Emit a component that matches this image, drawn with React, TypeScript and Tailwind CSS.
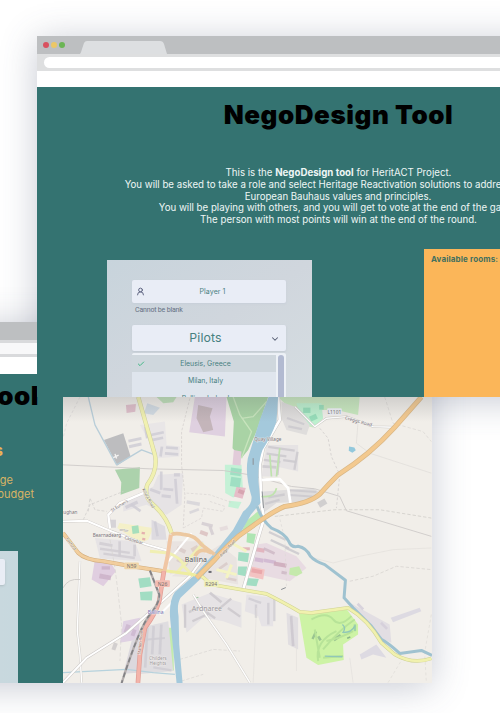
import React from "react";
import { Check, ChevronDown, UserRound } from "lucide-react";

type Road = { d: string; c: string; w: number; dash?: string };

const areas: [string, string][] = [
  ["M405 6 L500 6 L495 125 L388 112Z", "#dfd0e0"],
  ["M415 30 L458 40 L450 65 L460 105 L430 112 L410 70Z", "#c4b5ba"],
  ["M500 6 L625 6 L590 110 L565 165 L545 190 L518 160 L522 80Z", "#a9d3a5"],
  ["M132 135 L190 115 L212 185 L172 212Z", "#bdbdbf"],
  ["M165 225 L240 217 L238 280 L182 300 L184 262Z", "#acd2ac"],
  ["M198 30 L228 27 L226 50 L200 54Z", "#dfbfca"],
  ["M262 25 L300 38 L280 60 L252 55Z", "#d2dbe3"],
  ["M290 6 L350 6 L340 22 L310 25Z", "#bfe0b8"],
  ["M495 210 L545 210 L550 295 L520 308 L496 295Z", "#c4f1d6"],
  ["M522 165 L545 170 L542 212 L518 210Z", "#e2cbd9"],
  ["M530 275 L558 280 L548 312 L522 305Z", "#e6bdc8"],
  ["M508 318 L545 322 L535 342 L505 336Z", "#c4f1d6"],
  ["M178 385 L280 400 L265 435 L240 445 L172 400Z", "#f4f0c8"],
  ["M215 395 L235 392 L238 415 L218 418Z", "#a7dfbc"],
  ["M655 6 L900 6 L895 60 L830 45 L780 45 L790 70 L760 98 L730 90 L705 55Z", "#c9e9bf"],
  ["M710 25 L785 25 L790 70 L760 96 L725 75Z", "#bdf0cf"],
  ["M105 495 L150 500 L168 530 L130 575 L95 555Z", "#e0cee0"],
  ["M235 552 L270 548 L275 575 L240 580Z", "#a2ddc3"],
  ["M240 592 L278 590 L276 618 L242 617Z", "#a2ddc3"],
  ["M190 680 L240 670 L235 735 L180 745Z", "#dfd1e3"],
  ["M325 700 L340 700 L342 830 L325 810Z", "#c3ebae"],
  ["M585 450 L620 445 L710 485 L740 520 L690 560 L575 535Z", "#e8dbe2"],
  ["M572 515 L615 525 L610 555 L568 545Z", "#f3c3c2"],
  ["M562 550 L597 553 L590 575 L560 572Z", "#a2ddc3"],
  ["M690 520 L718 515 L728 535 L710 545 L688 540Z", "#c5e9ac"],
  ["M536 472 L568 476 L564 503 L534 498Z", "#a2ddc3"],
  ["M535 516 L562 516 L557 545 L532 540Z", "#a2ddc3"],
  ["M560 378 L600 345 L603 370 L545 412Z", "#b9e9b0"],
  ["M562 415 L588 418 L582 448 L560 443Z", "#aee5b3"],
  ["M403 610 L415 607 L427 630 L418 638Z", "#a2c9a7"],
  ["M718 658 L862 646 L895 690 L895 720 L850 750 L852 797 L775 812 L740 790Z", "#cdf3a5"],
  ["M240 700 L325 680 L340 830 L235 840Z", "#dfdde0"],
  ["M215 740 L240 720 L232 835 L190 838Z", "#dcd9de"],
  ["M365 630 L450 595 L545 625 L545 700 L490 680 L430 670 L380 715Z", "#e6e3e5"],
  ["M105 430 L225 440 L245 500 L120 492Z", "#e6e3e5"],
  ["M240 90 L315 80 L320 150 L360 155 L358 185 L295 190Z", "#e9e6e7"],
  ["M295 240 L370 235 L365 330 L320 360 L260 330 L190 350 L190 325 L280 275Z", "#e6e3e5"],
  ["M620 150 L715 150 L715 230 L650 215 L655 245 L605 245Z", "#e6e3e4"],
  ["M610 290 L760 280 L790 300 L735 320 L650 325 L610 355Z", "#dfdddd"],
  ["M665 20 L705 35 L750 90 L740 120 L680 105 L665 70Z", "#dfdddc"],
  ["M680 655 L715 670 L715 765 L685 750Z", "#e1dee1"],
  ["M560 600 L640 610 L640 695 L605 695 L595 665 L555 650Z", "#e6e3e6"],
  ["M275 375 L315 395 L320 435 L275 435Z", "#dedbe0"],
  ["M870 625 L990 690 L995 745 L960 730Z", "#e2dee3"],
  ["M993 670 L1080 640 L1085 650 L1000 683Z", "#dddae2"],
  ["M900 780 L950 750 L980 790 L940 780 L905 795Z", "#dddae2"],
  ["M320 440 L430 440 L440 500 L330 540Z", "#e9e3e0"],
  ["M335 545 L480 450 L530 490 L535 570 L430 550Z", "#e9e4e1"],
];

const blocks: [number, number, number, number, number, string][] = [
  [205, 130, 40, 9, -12, "#cfcdd5"], [207, 147, 38, 9, -12, "#cfcdd5"], [255, 95, 9, 35, -10, "#cfcdd5"], [272, 112, 40, 8, -12, "#cfcdd5"],
  [275, 128, 35, 8, -12, "#cfcdd5"], [300, 155, 8, 30, 8, "#cfcdd5"], [318, 155, 36, 8, 4, "#cfcdd5"], [315, 173, 40, 8, 4, "#cfcdd5"],
  [300, 230, 8, 55, 0, "#cfcdd5"], [342, 235, 18, 10, 0, "#cfcdd5"], [345, 252, 8, 75, -4, "#cfcdd5"], [310, 280, 30, 8, 5, "#cfcdd5"],
  [305, 300, 28, 9, 5, "#cfcdd5"], [270, 285, 32, 9, 20, "#cfcdd5"], [195, 325, 40, 10, -25, "#cfcdd5"], [210, 335, 35, 8, 35, "#cfcdd5"],
  [380, 320, 40, 10, 10, "#d6d3d8"], [388, 345, 30, 8, -20, "#d6d3d8"], [150, 375, 18, 24, 0, "#d1ced4"], [285, 380, 8, 45, -10, "#cfcdd5"],
  [512, 220, 32, 22, 8, "#99dcbf"], [512, 248, 30, 28, 8, "#99dcbf"], [535, 285, 18, 12, 20, "#d3a0ab"], [730, 38, 22, 16, 0, "#8fd9b5"],
  [750, 60, 22, 16, -25, "#8fd9b5"], [778, 30, 14, 14, 0, "#8fd9b5"], [245, 412, 10, 7, 10, "#e2a4a9"], [247, 430, 9, 7, 10, "#e2a4a9"],
  [625, 158, 80, 7, 8, "#cbc9ce"], [620, 177, 60, 7, 8, "#cbc9ce"], [612, 195, 50, 7, 8, "#cbc9ce"], [608, 212, 42, 8, 4, "#cbc9ce"],
  [652, 180, 7, 60, 5, "#cbc9ce"], [705, 170, 7, 55, 10, "#cbc9ce"], [670, 195, 38, 7, 8, "#cbc9ce"], [625, 300, 50, 7, -10, "#cbc9ce"],
  [690, 286, 80, 6, 4, "#cbc9ce"], [690, 300, 75, 6, 4, "#cbc9ce"], [615, 318, 45, 7, -15, "#cbc9ce"], [680, 75, 55, 7, 20, "#cbc9ce"],
  [685, 95, 42, 7, 12, "#cbc9ce"], [775, 316, 25, 18, -30, "#cbc9ca"], [118, 445, 40, 9, 10, "#d0cdd2"], [120, 465, 90, 7, 8, "#d0cdd2"],
  [130, 480, 95, 7, 8, "#d0cdd2"], [175, 440, 8, 45, 0, "#d0cdd2"], [220, 450, 8, 35, 0, "#d0cdd2"], [118, 540, 35, 14, 10, "#cbb1c8"],
  [125, 515, 25, 10, 0, "#cbb1c8"], [195, 690, 14, 25, 20, "#cdb7cf"], [215, 705, 12, 20, 20, "#cdb7cf"], [158, 745, 12, 22, 20, "#cdc9ca"],
  [255, 700, 8, 120, 3, "#cfccd2"], [275, 695, 8, 85, 3, "#cfccd2"], [298, 690, 8, 90, 3, "#cfccd2"], [255, 730, 60, 6, -5, "#cfccd2"],
  [280, 820, 55, 7, 10, "#cfccd2"], [372, 630, 7, 70, 0, "#cbc8cd"], [385, 640, 45, 7, -25, "#cbc8cd"], [395, 665, 55, 7, -25, "#cbc8cd"],
  [445, 605, 45, 8, 40, "#cbc8cd"], [470, 625, 50, 7, -40, "#cbc8cd"], [500, 650, 45, 7, 35, "#cbc8cd"], [425, 655, 45, 7, 35, "#cbc8cd"],
  [588, 460, 26, 12, 10, "#e0aeb9"], [585, 490, 26, 12, 10, "#cfb5d0"], [612, 495, 36, 10, 10, "#cfb5d0"], [642, 504, 38, 12, 10, "#cda9ba"],
  [575, 524, 32, 12, 10, "#e7a3a7"], [610, 465, 36, 8, 25, "#ceb9c6"], [625, 420, 55, 7, 25, "#cbc9ce"], [630, 445, 60, 7, 25, "#cbc9ce"],
  [675, 465, 45, 7, 25, "#cbc9ce"], [665, 530, 16, 9, 10, "#ceb9c6"], [548, 458, 22, 9, 0, "#dfaeb2"],
  [622, 625, 7, 65, 0, "#cfccd2"], [640, 610, 7, 70, 0, "#cfccd2"], [585, 630, 7, 40, 0, "#cfccd2"], [565, 615, 40, 7, 20, "#cfccd2"],
  [693, 665, 8, 90, -4, "#cbc7ce"], [480, 395, 24, 12, -15, "#e4d9db"], [425, 385, 34, 10, 15, "#d3cdd1"], [420, 410, 24, 12, 20, "#dbbfc0"], [450, 395, 9, 26, -20, "#d3cdd1"],
  [350, 460, 28, 12, 25, "#d8cac8"], [350, 495, 35, 12, 25, "#d8cac8"], [395, 455, 22, 18, -30, "#dccbc2"], [475, 510, 30, 8, -35, "#d8cac8"],
  [446, 529, 9, 6, 0, "#55565e"], [490, 530, 26, 8, 12, "#d8cac8"], [500, 550, 30, 8, 12, "#d8cac8"], [960, 690, 26, 8, 45, "#d3ced9"],
  [890, 632, 24, 8, 45, "#d3ced9"], [760, 710, 7, 25, 25, "#8fba8d"], [820, 725, 25, 9, -35, "#8fba8d"], [862, 727, 10, 5, -20, "#7ea883"],
  [775, 725, 8, 14, -30, "#8fba8d"], [882, 690, 7, 20, 0, "#95cda7"],
];

const roads: Road[] = [
  { d: "M85 6 L105 90 L170 210 L245 165 L285 180", c: "#b9ced9", w: 4 },
  { d: "M9 835 L200 825 L280 835 L345 840", c: "#b6d2dd", w: 4 },
  { d: "M9 210 L270 222 L490 227 L570 240 L695 275 L765 282 L840 305 L860 348 L1115 425", c: "#cbc8c6", w: 2.5 },
  { d: "M60 6 L20 85 L9 130", c: "#dad7d6", w: 2, dash: "9 6" },
  { d: "M390 10 L365 110 L365 210 L375 300 L370 400", c: "#d1cdcb", w: 2, dash: "8 5" },
  { d: "M780 100 L805 130 L815 185 L840 240 L830 340", c: "#d2cfcd", w: 2.5, dash: "8 6" },
  { d: "M895 80 L890 145 L930 175 L1115 235", c: "#dedbd8", w: 2 },
  { d: "M645 365 L825 345 L960 345 L1115 370", c: "#d1cfca", w: 2.5, dash: "10 6" },
  { d: "M975 6 L1000 85 L1090 110 L1115 140", c: "#d8d5d1", w: 2, dash: "10 6" },
  { d: "M870 560 L940 545 L1010 515 L1115 525", c: "#d8d5d1", w: 2.5, dash: "10 6" },
  { d: "M760 490 L820 505 L900 485 L1000 465 L1115 460", c: "#e2dfdb", w: 2 },
  { d: "M590 640 L580 865 M710 750 L710 830 M870 790 L880 865", c: "#e3dfdc", w: 2 },
  { d: "M680 575 L675 435 L655 350", c: "#dcd9d6", w: 2, dash: "8 7" },
  { d: "M1115 660 L1095 775 L1100 865 M985 865 L1030 790", c: "#dedbd6", w: 2, dash: "9 7" },
  { d: "M70 375 L90 330 L190 290 M85 350 L90 310 L105 345 L140 350", c: "#d5d2d0", w: 2.5, dash: "9 5" },
  { d: "M150 435 L165 520 L175 600 L185 690 L180 800", c: "#d8d5d2", w: 2, dash: "12 6" },
  { d: "M380 295 L450 300 L520 325 M450 320 L495 335 L490 350 L430 340 L425 370 L370 400", c: "#d8d3d2", w: 2, dash: "8 5" },
  { d: "M360 795 L460 765 L540 770 M365 860 L430 840", c: "#d8d5d1", w: 2, dash: "10 5" },
  { d: "M65 865 L60 780 L52 710 L60 500", c: "#d2cfcb", w: 7 },
  { d: "M65 865 L60 780 L52 710 L60 500", c: "#ffffff", w: 4 },
  { d: "M9 580 Q25 550 60 555", c: "#d1cecb", w: 3 },
  { d: "M9 380 L80 378 L155 410 L260 450 L330 470", c: "#cac6c3", w: 8 },
  { d: "M9 380 L80 378 L155 410 L260 450 L330 470", c: "#ffffff", w: 6 },
  { d: "M150 400 L145 360 L180 325 L250 295", c: "#cfcaca", w: 9 },
  { d: "M150 400 L145 360 L180 325 L250 295", c: "#ffffff", w: 7 },
  { d: "M9 865 L80 790 L200 715 L290 635 L390 545 L430 490", c: "#cbc7c5", w: 9 },
  { d: "M9 865 L80 790 L200 715 L290 635 L390 545 L430 490", c: "#ffffff", w: 6 },
  { d: "M300 660 L400 560 M325 500 L395 415", c: "#ffffff", w: 6 },
  { d: "M400 600 L430 650 L500 750 L570 865", c: "#d5d2ce", w: 7 },
  { d: "M400 600 L430 650 L500 750 L570 865", c: "#ffffff", w: 4 },
  { d: "M655 6 L660 75 L610 160 L600 210 L605 330 L613 370 L595 430 L550 585", c: "#c9c6c4", w: 11 },
  { d: "M655 6 L660 75 L610 160 L600 210 L605 330 L613 370 L595 430 L550 585", c: "#ffffff", w: 8 },
  { d: "M605 255 L660 253 L685 280 L692 325", c: "#ffffff", w: 8 },
  { d: "M705 35 L765 95 L800 70 L860 65 L940 95 L1005 97", c: "#cac7c3", w: 7 },
  { d: "M705 35 L765 95 L800 70 L860 65 L940 95 L1005 97", c: "#ffffff", w: 4 },
  { d: "M545 70 L580 65 L620 20 M545 190 L575 110 L540 60 L520 6", c: "#c8e4bd", w: 4 },
  { d: "M630 180 L635 245 M660 160 L650 245 M605 305 Q645 310 650 280", c: "#bfe3ad", w: 5 },
];

const mainRoads: Road[] = [
  { d: "M235 6 L285 180 Q295 225 262 270 Q250 305 280 330 Q320 365 335 415", c: "#cfcfa0", w: 13 },
  { d: "M235 6 L285 180 Q295 225 262 270 Q250 305 280 330 Q320 365 335 415", c: "#f1f1b0", w: 10 },
  { d: "M270 470 L325 475 Q365 490 372 515 L400 545 M350 535 L430 445", c: "#f0efb3", w: 9 },
  { d: "M420 540 L455 570 L555 587 L620 598 Q665 620 720 652 L755 655 L865 640 Q925 675 965 745 L1005 780 Q1060 812 1115 792", c: "#cfd294", w: 11 },
  { d: "M420 540 L455 570 L555 587 L620 598 Q665 620 720 652 L755 655 L865 640 Q925 675 965 745 L1005 780 Q1060 812 1115 792", c: "#f1f1ae", w: 8 },
  { d: "M470 525 L530 540 M515 445 L560 470 M515 510 L500 550", c: "#f4f3c4", w: 9 },
  { d: "M310 528 L400 540 L420 545", c: "#eeeda0", w: 9 },
  { d: "M9 415 L55 475 Q75 495 130 500 L215 515 L312 530", c: "#d2ad7d", w: 12 },
  { d: "M9 415 L55 475 Q75 495 130 500 L215 515 L312 530", c: "#f2ce9d", w: 9 },
  { d: "M1085 6 L1005 97 Q930 180 835 240 Q805 270 780 298 Q750 325 675 335 Q650 345 605 375 L535 425 Q490 465 465 495 L410 550", c: "#d9b786", w: 15 },
  { d: "M1085 6 L1005 97 Q930 180 835 240 Q805 270 780 298 Q750 325 675 335 Q650 345 605 375 L535 425 Q490 465 465 495 L410 550", c: "#f3c98f", w: 11 },
  { d: "M335 420 Q345 414 375 420 Q405 422 425 450 Q445 465 465 480 M405 485 Q420 455 455 475", c: "#ecc8a0", w: 11 },
  { d: "M333 420 L322 490 L312 535", c: "#f0c6a4", w: 12 },
  { d: "M312 530 L298 620 Q285 660 255 700 L240 780 L234 866", c: "#df9c94", w: 14 },
  { d: "M312 530 L298 620 Q285 660 255 700 L240 780 L234 866", c: "#f3b4aa", w: 10 },
];

const labels: [number, number, string, number, number, string][] = [
  [408, 502, "Ballina", 21, 0, "#55545a"], [441, 650, "Ardnaree", 21, 0, "#98959b"], [287, 660, "Ballina", 15, 0, "#7672b8"],
  [141, 427, "Bearnadearg", 14, 0, "#77727a"], [624, 139, "Quay Village", 14, 0, "#77727a"], [294, 797, "Childers", 14, 0, "#98949a"],
  [294, 813, "Heights", 14, 0, "#98949a"], [31, 357, "ughan", 14, 0, "#77727a"], [181, 336, "St Eunan's", 12, -31, "#77727a"],
  [262, 312, "Killala Road", 12, 62, "#706f58"], [220, 441, "Castlebar", 13, 18, "#77727a"], [192, 410, "ortur", 11, 8, "#8a877c"],
  [895, 84, "Creggs Road", 14, 15, "#77727a"], [245, 745, "Station Road", 12, -84, "#955c58"], [30, 450, "Foxford", 12, 53, "#86704f"],
  [506, 464, "Ridge Road", 12, -48, "#84704f"],
];

function TownMap() {
  return (
    <svg className="block h-full w-full" viewBox="9 6 1108 860" preserveAspectRatio="none" fill="none">
      <defs>
        <linearGradient id="mapShade" x1="0" y1="0" x2="0" y2="1">
          <stop offset="0" stopColor="#62656a" stopOpacity=".22" />
          <stop offset="1" stopColor="#62656a" stopOpacity="0" />
        </linearGradient>
      </defs>
      <rect x="9" y="6" width="1108" height="860" fill="#f1eee9" />
      {areas.map(([d, c], i) => <path key={i} d={d} fill={c} />)}
      {blocks.map(([x, y, w, h, r, c], i) => (
        <rect key={i} x={x} y={y} width={w} height={h} fill={c} fillOpacity="0.85" transform={`rotate(${r} ${x + w / 2} ${y + h / 2})`} />
      ))}
      <g strokeLinejoin="round">
        {roads.map((r, i) => <path key={i} d={r.d} stroke={r.c} strokeWidth={r.w} strokeDasharray={r.dash} />)}
      </g>
      <path d="M626 6 L655 6 L650 80 Q635 125 608 165 Q594 200 596 260 L602 325 L573 360 L546 408 L480 486 L420 555 L362 610 Q350 630 356 665 L358 750 L368 866 H350 L340 765 L331 675 Q326 620 345 592 L400 545 L458 482 L520 405 L550 350 Q578 330 575 305 Q555 240 564 190 L600 75 Z" fill="#a4c9dc" />
      <path d="M592 335 Q605 375 635 400 Q675 415 687 440 Q695 460 715 455 Q740 460 752 485 Q765 500 795 510 L857 557 L853 610 L880 640 L935 695 L965 735 Q985 745 1020 777 L1085 768 L1117 783" stroke="#9fc2d0" strokeWidth="9" strokeLinejoin="round" />
      <g strokeLinejoin="round">
        {mainRoads.map((r, i) => <path key={i} d={r.d} stroke={r.c} strokeWidth={r.w} />)}
      </g>
      <path d="M270 528 L298 600 Q300 625 270 660 Q238 700 185 866" stroke="#b5afae" strokeWidth="7" />
      <path d="M270 528 L298 600 Q300 625 270 660 Q238 700 185 866" stroke="#828285" strokeWidth="5" strokeDasharray="15 9" />
      <path d="M755 675 Q800 650 820 675 T875 665 M765 705 L780 790 M790 765 Q840 705 885 675 M790 790 L850 785 M775 800 Q765 740 830 710 M800 740 Q845 730 880 710" stroke="#b7e398" strokeWidth="6" />
      <path d="M848 690 Q860 700 850 714 Q875 715 885 695 M795 785 L848 787" stroke="#91c7b7" strokeWidth="4" />
      <path d="M868 155 L884 158 L888 166 L878 174 L867 168Z" fill="#93c8dc" />
      <path d="M165 177 l5 14 m-10-3 l16-7" stroke="#f5f4f3" strokeWidth="4" />
      <path d="M580 190 v20 M607 290 l4 50 M664 585 l14-6" stroke="#8c9095" strokeWidth="3" />
      <g fontFamily="Noto Sans, sans-serif" textAnchor="middle">
        {[[215, 514, "N59", "#f0d5a8"], [308, 567, "N26", "#f3bdb3"], [454, 567, "R294", "#eff0bd"], [824, 50, "L1101", "#eef0f5"]].map(([x, y, t, c]) => (
          <g key={String(t)}>
            <rect x={Number(x) - 22} y={Number(y) - 10} width="44" height="20" rx="3" fill={String(c)} />
            <text x={x} y={Number(y) + 6} fontSize="15" fill="#77706d">{t}</text>
          </g>
        ))}
        {labels.map(([x, y, t, s, r, c]) => (
          <text key={t + y} x={x} y={y} fontSize={s} fill={c} stroke="#f5f2ee" strokeWidth="2" paintOrder="stroke" transform={`rotate(${r} ${x} ${y})`}>{t}</text>
        ))}
      </g>
      <rect x="9" y="6" width="1108" height="75" fill="url(#mapShade)" />
    </svg>
  );
}

function BrowserBar() {
  return (
    <div className="shrink-0">
      <div className="flex h-[18px] items-end bg-[#bdbfc1]">
        <div className="flex h-full w-[43px] items-center gap-[2px] pl-[6px]">
          <i className="size-[6px] rounded-full bg-[#d9515f]" />
          <i className="size-[6px] rounded-full bg-[#ecc766]" />
          <i className="size-[6px] rounded-full bg-[#6bb554]" />
        </div>
        <svg className="h-[13px] w-[88px]" viewBox="0 0 88 13">
          <path d="M0 13 Q1 12 2 8 L4 2 Q5 0 7 0 H80 Q83 0 84 3 L87 13Z" fill="#dddfe1" />
        </svg>
      </div>
      <div className="h-[17px] bg-[#dedfe0] py-[3px] pl-[7px]">
        <div className="h-[11px] rounded-l-full bg-white" />
      </div>
      <div className="h-4 bg-white" />
    </div>
  );
}

function BackWindow() {
  return (
    <section className="absolute top-[322px] left-[-171px] flex h-[361px] w-[603px] flex-col bg-[#347371] shadow-[0_4px_34px_rgba(70,80,110,0.30)]">
      <div className="h-[18px] bg-[#bdbfc1]" />
      <div className="h-[17px] bg-[#d9dadc] py-[3px]"><div className="h-[11px] bg-[#f8f8f9]" /></div>
      <div className="h-[17px] bg-white" />
      <div className="flex min-h-0 flex-1">
        <div className="flex w-[234px] flex-col">
          <h2 className="mt-[8px] flex justify-end pr-[24px] text-[26px] leading-[28px] font-black tracking-[0.5px] whitespace-nowrap text-black"><span>NegoDesign Tool</span></h2>
          <h3 className="mt-[31px] pr-[60px] text-right text-[15px] leading-[20px] font-bold text-[#efb354]">Roles</h3>
          <p className="mt-[13px] pr-[29px] text-right text-[11px] leading-[13.5px] text-[#d9b465]"><span className="mr-[21px]">manage</span><br />the budget</p>
          <div className="mt-auto h-[132px] w-[189px] bg-gradient-to-r from-[#d2d9df] to-[#c7d8de] pt-[8px]">
            <div className="h-[26px] w-[176px] rounded-[2px] bg-[#e9edf5] shadow-sm" />
          </div>
        </div>
        <div className="mt-[23px] h-[286px] w-[369px]"><TownMap /></div>
      </div>
    </section>
  );
}

function JoinForm() {
  return (
    <div className="ml-[70px] h-[137px] w-[205px] bg-gradient-to-br from-[#c8d4dc] via-[#d0d6dd] to-[#d5dde1] px-[25px] pt-5 text-[#47807f]">
      <div className="relative flex h-[23px] w-[154px] items-center justify-center rounded-[2px] bg-[#e9edf6] pt-[2px] pl-[7px] text-[7px] tracking-[0.1px] shadow-[0_1px_2px_#b9c4d155]">
        <UserRound className="absolute top-[7px] left-[4px] size-[9px] text-[#535a78]" strokeWidth={2.4} />
        Player 1
      </div>
      <p className="mt-[2px] pl-[3px] font-['Roboto'] text-[7px] leading-[11px] tracking-[-0.18px] text-[#657083]">Cannot be blank</p>
      <div className="relative mt-[9px] flex h-[26px] w-[154px] items-center justify-center rounded-[2px] bg-[#e9edf6] pt-px pr-[7px] text-[12.3px] tracking-[0.15px] shadow-[0_1px_2px_#a9b4c166]">
        Pilots
        <ChevronDown className="absolute right-[6px] size-[10px] text-[#535a70]" strokeWidth={2.5} />
      </div>
      <div className="mt-[2px] flex h-[44px] w-[154px] overflow-hidden rounded-t-[2px] bg-[#edf1f6] pt-[2px] text-[6.9px]">
        <div className="w-[144px]">
          <div className="relative flex h-[17px] items-center justify-center bg-[#cfd7dd] pt-[2px] pl-[3px]">
            <Check className="absolute top-[5px] left-[5px] size-[8px] text-[#43b987]" strokeWidth={3} />
            Eleusis, Greece
          </div>
          <div className="flex h-[18px] items-center justify-center bg-[#dfe5ed] pl-[3px]">Milan, Italy</div>
          <div className="flex h-[17px] items-center justify-center bg-[#dfe5ed] pt-[1px] pl-[3px]">Ballina, Ireland</div>
        </div>
        <div className="ml-[2px] w-[6px] rounded-t-[3px] bg-[#b2bad1]" />
      </div>
    </div>
  );
}

function FrontWindow() {
  return (
    <section className="absolute top-[36px] left-[37px] flex h-[361px] w-[603px] flex-col overflow-hidden bg-[#347371]">
      <BrowserBar />
      <div className="h-[162px] text-center text-white">
        <h1 className="pt-[13px] text-[26px] leading-[30px] font-black tracking-[0.55px] text-black">NegoDesign Tool</h1>
        <div className="mt-[37px] text-[9.7px] leading-[11.8px] whitespace-nowrap text-[#eef6f5]">
          <p>This is the <b>NegoDesign tool</b> for HeritACT Project.</p>
          <p>You will be asked to take a role and select Heritage Reactivation solutions to address the New</p>
          <p className="pr-px tracking-[-0.05px]">European Bauhaus values and principles.</p>
          <p>You will be playing with others, and you will get to vote at the end of the game.</p>
          <p>The person with most points will win at the end of the round.</p>
        </div>
      </div>
      <div className="flex h-[148px] items-end">
        <JoinForm />
        <div className="ml-[112px] h-[148px] w-[216px] bg-[#fbb659] pt-[4px] pl-[7px] text-[8px] leading-[12px] font-bold tracking-[0.13px] text-[#42705f]">Available rooms:</div>
      </div>
    </section>
  );
}

export default function App() {
  return (
    <main className="relative h-[713px] w-[500px] overflow-hidden bg-white font-['Inter','Liberation_Sans',sans-serif]">
      <div className="absolute top-[36px] left-[37px] h-[361px] w-[603px] shadow-[0_4px_34px_rgba(70,80,110,0.30)]" />
      <BackWindow />
      <FrontWindow />
    </main>
  );
}
